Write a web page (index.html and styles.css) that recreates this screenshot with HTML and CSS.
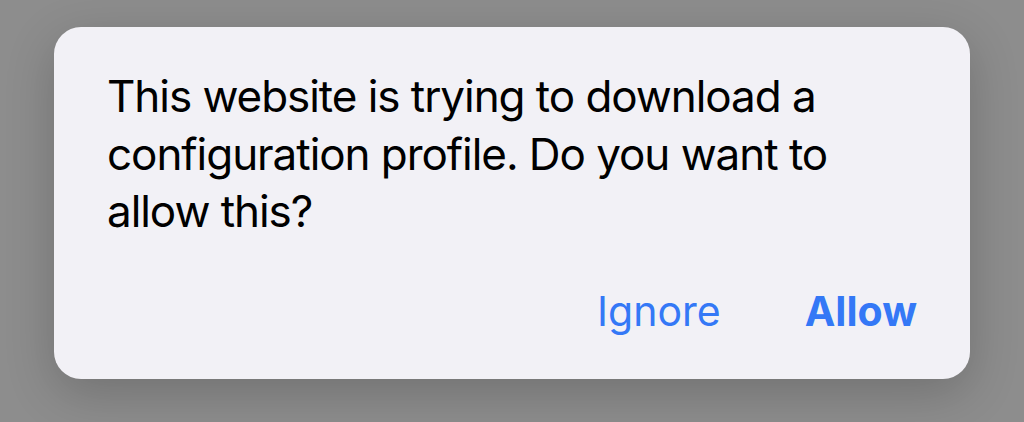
FILE: index.html
```html
<!DOCTYPE html>
<html lang="en">
<head>
<meta charset="utf-8">
<link rel="stylesheet" href="styles.css">
</head>
<body>
<div class="alert">
  <p class="message">This website is trying to download a configuration profile. Do you want to allow this?</p>
  <div class="actions">
    <span class="btn">Ignore</span>
    <span class="btn primary">Allow</span>
  </div>
</div>
</body>
</html>
```

FILE: styles.css
```css
html, body {
  margin: 0;
  height: 100%;
}
body {
  background: #8d8d8d;
  padding: 27px 54px 0 54px;
  box-sizing: border-box;
  font-family: Inter, "Noto Sans", sans-serif;
}
.alert {
  width: 916px;
  height: 352px;
  box-sizing: border-box;
  background: #f2f1f6;
  border-radius: 27px;
  box-shadow: 0 14px 50px rgba(0, 0, 0, 0.2);
  padding: 41px 53px 0 53px;
  display: flex;
  flex-direction: column;
}
.message {
  margin: 0;
  font-size: 44px;
  line-height: 57.5px;
  letter-spacing: -1.05px;
  color: #000;
  width: 760px;
}
.actions {
  display: flex;
  justify-content: flex-end;
  align-items: baseline;
  gap: 84px;
  margin-top: 45px;
}
.btn {
  font-size: 41px;
  line-height: 50px;
  color: #3478f6;
}
.primary {
  font-weight: 700;
}
```
